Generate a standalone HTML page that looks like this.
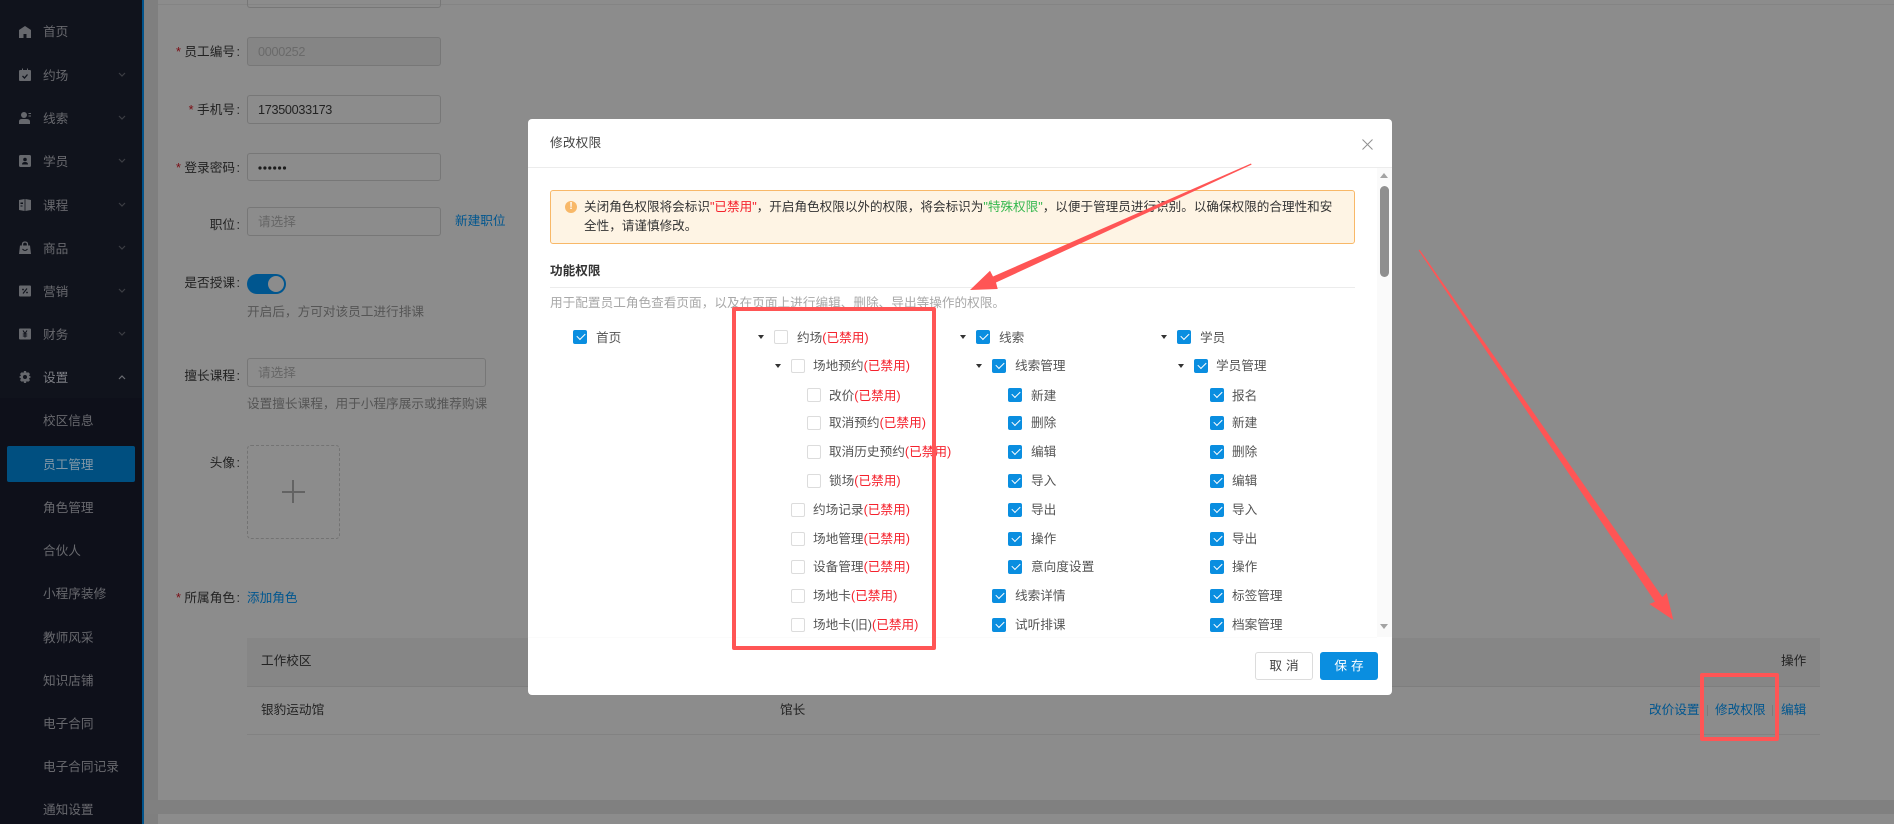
<!DOCTYPE html>
<html lang="zh-CN">
<head>
<meta charset="utf-8">
<title>修改权限</title>
<style>
html,body{margin:0;padding:0;width:1894px;height:824px;overflow:hidden;background:#8c8c8c}
body{position:relative;font-family:"Liberation Sans","Noto Sans CJK SC",sans-serif;font-size:12.65px;color:#222}
div,span,a,svg{box-sizing:border-box}
.a{position:absolute}
.t{position:absolute;white-space:nowrap;line-height:18px;height:18px}
.r{text-align:right;width:120px;left:120px}
.r i{font-style:normal;margin-left:1.5px}
.req{color:#7a0b12}
.in{position:absolute;left:247px;width:194px;height:29px;border:1px solid #777;border-radius:3px;padding-left:10px;line-height:29px;white-space:nowrap}
.num{letter-spacing:-.3px}
.ph{color:#666}
.hp{color:#555}
.lk{color:#00568f}
.nav{color:#68696e}
.ic{position:absolute;left:19px;width:12px;height:14px}
.ch{position:absolute;left:118px;width:8px;height:5px}
.cb{position:absolute;width:14px;height:14px;border:1px solid #dcdcdc;border-radius:2px;background:#fff}
.cb.on{background:#0a8ee0;border-color:#0a8ee0}
.cb.on:after{content:"";position:absolute;left:3px;top:2px;width:7px;height:4px;border-left:1px solid #fff;border-bottom:1px solid #fff;transform:rotate(-45deg)}
.ca{position:absolute;width:0;height:0;border-left:3.5px solid transparent;border-right:3.5px solid transparent;border-top:4px solid #333}
.l{position:absolute;white-space:nowrap;line-height:18px;height:18px;color:#555}
.l i{font-style:normal;color:#f5222d}
</style>
</head>
<body>
<!-- page -->
<div class="a" style="left:144px;top:0;width:14px;height:824px;background:#7f7f7f"></div>
<div class="a" style="left:158px;top:4px;width:1736px;height:796px;background:#8c8c8c;border-top:1px solid #848484"></div>
<div class="a" style="left:144px;top:800px;width:1750px;height:14px;background:#808080"></div>
<div class="a" style="left:247px;top:0;width:194px;height:8px;border:1px solid #777;border-top:0;border-radius:0 0 3px 3px"></div>

<!-- sidebar -->
<div class="a" style="left:0;top:0;width:142px;height:824px;background:#10131c"></div>
<div class="a" style="left:142px;top:0;width:2px;height:824px;background:#00528a"></div>
<div class="a" style="left:0;top:398px;width:142px;height:426px;background:#0e101a"></div>
<div class="a" style="left:7px;top:446px;width:128px;height:36px;background:#004f80;border-radius:2px"></div>

<svg class="ic" style="top:25px" viewBox="0 0 12 14"><path fill="#66686d" d="M6 1 L12 5 V13 H7.5 V9 H4.5 V13 H0 V5 Z"/></svg>
<svg class="ic" style="top:68px" viewBox="0 0 12 14"><path fill="#66686d" d="M1.5 2 H3 V0.5 H4 V2 H8 V0.5 H9 V2 H11 Q12 2 12 3 V12 Q12 13 11 13 H1 Q0 13 0 12 V3 Q0 2 1.5 2 Z"/><path fill="none" stroke="#10131c" stroke-width="1.3" d="M3.5 8 L5.5 10 L8.5 6.5"/></svg>
<svg class="ic" style="top:111px" viewBox="0 0 12 14"><circle cx="5" cy="4" r="3" fill="#66686d"/><path fill="#66686d" d="M0 13 V10.5 Q0 8 3 8 H7 Q11 8 11 10.5 V13 Z"/><path fill="#66686d" d="M9.5 2 H12 V3 H9.5 Z M9.5 4.5 H12 V5.5 H9.5 Z"/></svg>
<svg class="ic" style="top:154px" viewBox="0 0 12 14"><rect x="0" y="1" width="12" height="12" rx="1.5" fill="#66686d"/><circle cx="6" cy="5.5" r="1.8" fill="#10131c"/><path fill="#10131c" d="M3 10.5 Q3 8 6 8 Q9 8 9 10.5 Z"/></svg>
<svg class="ic" style="top:198px" viewBox="0 0 12 14"><path fill="#66686d" d="M0 2 L5.6 1 V13 L0 12 Z M6.4 1 L12 2 V12 L6.4 13 Z"/><path fill="#10131c" d="M1.5 4.5 H4 V6 H1.5 Z M1.5 7.5 H3.5 V8.5 H1.5 Z"/></svg>
<svg class="ic" style="top:241px" viewBox="0 0 12 14"><path fill="none" stroke="#66686d" stroke-width="1.3" d="M3.5 5 V3.5 Q3.5 1 6 1 Q8.5 1 8.5 3.5 V5"/><path fill="#66686d" d="M1 4.5 H11 L12 13 H0 Z"/><path fill="none" stroke="#10131c" d="M3.5 8 Q6 11 8.5 8"/></svg>
<svg class="ic" style="top:284px" viewBox="0 0 12 14"><rect y="1.5" width="12" height="11" rx="1" fill="#66686d"/><path fill="none" stroke="#10131c" stroke-width="1.1" d="M4 9.5 L8 4.5"/><circle cx="4" cy="5.5" r=".9" fill="#10131c"/><circle cx="8" cy="8.5" r=".9" fill="#10131c"/></svg>
<svg class="ic" style="top:327px" viewBox="0 0 12 14"><rect y="1.5" width="12" height="11" rx="1" fill="#66686d"/><path fill="none" stroke="#10131c" stroke-width="1.1" d="M4 3.5 L6 6.5 L8 3.5 M6 6.5 V10.5 M3.8 7 H8.2 M3.8 9 H8.2"/></svg>
<svg class="ic" style="top:370px" viewBox="0 0 12 14"><path fill="#66686d" d="M5 1 H7 L7.5 2.8 L9.3 2.2 L11 4 L10 5.5 L12 7 L10 8.5 L11 10.2 L9.3 11.8 L7.5 11.2 L7 13 H5 L4.5 11.2 L2.7 11.8 L1 10.2 L2 8.5 L0 7 L2 5.5 L1 4 L2.7 2.2 L4.5 2.8 Z"/><circle cx="6" cy="7" r="2" fill="#10131c"/></svg>

<span class="t nav" style="left:43px;top:23px">首页</span>
<span class="t nav" style="left:43px;top:67px">约场</span>
<span class="t nav" style="left:43px;top:110px">线索</span>
<span class="t nav" style="left:43px;top:153px">学员</span>
<span class="t nav" style="left:43px;top:197px">课程</span>
<span class="t nav" style="left:43px;top:240px">商品</span>
<span class="t nav" style="left:43px;top:283px">营销</span>
<span class="t nav" style="left:43px;top:326px">财务</span>
<span class="t" style="left:43px;top:369px;color:#7c7e84">设置</span>
<span class="t nav" style="left:43px;top:412px">校区信息</span>
<span class="t" style="left:43px;top:456px;color:#8197a6">员工管理</span>
<span class="t nav" style="left:43px;top:499px">角色管理</span>
<span class="t nav" style="left:43px;top:542px">合伙人</span>
<span class="t nav" style="left:43px;top:585px">小程序装修</span>
<span class="t nav" style="left:43px;top:629px">教师风采</span>
<span class="t nav" style="left:43px;top:672px">知识店铺</span>
<span class="t nav" style="left:43px;top:715px">电子合同</span>
<span class="t nav" style="left:43px;top:758px">电子合同记录</span>
<span class="t nav" style="left:43px;top:801px">通知设置</span>

<svg class="ch" style="top:72px" viewBox="0 0 8 5"><path d="M1 1 L4 4 L7 1" fill="none" stroke="#3c3e44" stroke-width="1.2"/></svg>
<svg class="ch" style="top:115px" viewBox="0 0 8 5"><path d="M1 1 L4 4 L7 1" fill="none" stroke="#3c3e44" stroke-width="1.2"/></svg>
<svg class="ch" style="top:158px" viewBox="0 0 8 5"><path d="M1 1 L4 4 L7 1" fill="none" stroke="#3c3e44" stroke-width="1.2"/></svg>
<svg class="ch" style="top:202px" viewBox="0 0 8 5"><path d="M1 1 L4 4 L7 1" fill="none" stroke="#3c3e44" stroke-width="1.2"/></svg>
<svg class="ch" style="top:245px" viewBox="0 0 8 5"><path d="M1 1 L4 4 L7 1" fill="none" stroke="#3c3e44" stroke-width="1.2"/></svg>
<svg class="ch" style="top:288px" viewBox="0 0 8 5"><path d="M1 1 L4 4 L7 1" fill="none" stroke="#3c3e44" stroke-width="1.2"/></svg>
<svg class="ch" style="top:331px" viewBox="0 0 8 5"><path d="M1 1 L4 4 L7 1" fill="none" stroke="#3c3e44" stroke-width="1.2"/></svg>
<svg class="ch" style="top:375px" viewBox="0 0 8 5"><path d="M1 4 L4 1 L7 4" fill="none" stroke="#6a6c72" stroke-width="1.2"/></svg>

<!-- form -->
<span class="t r" style="top:43px"><span class="req">* </span>员工编号<i>:</i></span>
<div class="in ph num" style="top:37px;background:#858585;color:#6a6a6a">0000252</div>
<span class="t r" style="top:101px"><span class="req">* </span>手机号<i>:</i></span>
<div class="in num" style="top:95px">17350033173</div>
<span class="t r" style="top:159px"><span class="req">* </span>登录密码<i>:</i></span>
<div class="in" style="top:153px;height:28px"></div>
<svg class="a" style="left:257px;top:165px;width:32px;height:6px" viewBox="0 0 32 6"><g fill="#1c1c1c"><circle cx="3" cy="3" r="1.6"/><circle cx="7.9" cy="3" r="1.6"/><circle cx="12.8" cy="3" r="1.6"/><circle cx="17.7" cy="3" r="1.6"/><circle cx="22.6" cy="3" r="1.6"/><circle cx="27.5" cy="3" r="1.6"/></g></svg>
<span class="t r" style="top:216px">职位<i>:</i></span>
<div class="in ph" style="top:207px">请选择</div>
<span class="t lk" style="left:455px;top:212px">新建职位</span>
<span class="t r" style="top:274px">是否授课<i>:</i></span>
<div class="a" style="left:247px;top:274px;width:39px;height:20px;background:#00568f;border-radius:10px"></div>
<div class="a" style="left:268px;top:276px;width:16px;height:16px;background:#8c8c8c;border-radius:50%"></div>
<span class="t hp" style="left:247px;top:303px">开启后，方可对该员工进行排课</span>
<span class="t r" style="top:367px">擅长课程<i>:</i></span>
<div class="in ph" style="top:358px;width:239px">请选择</div>
<span class="t hp" style="left:247px;top:395px">设置擅长课程，用于小程序展示或推荐购课</span>
<span class="t r" style="top:454px">头像<i>:</i></span>
<div class="a" style="left:247px;top:445px;width:93px;height:94px;border:1px dashed #737373;border-radius:4px"></div>
<div class="a" style="left:282px;top:491px;width:23px;height:2px;background:#636363"></div>
<div class="a" style="left:292px;top:480px;width:2px;height:23px;background:#636363"></div>
<span class="t r" style="top:589px"><span class="req">* </span>所属角色<i>:</i></span>
<span class="t lk" style="left:247px;top:589px">添加角色</span>

<div class="a" style="left:247px;top:638px;width:1573px;height:49px;background:#868686;border-bottom:1px solid #7e7e7e"></div>
<div class="a" style="left:247px;top:687px;width:1573px;height:48px;border-bottom:1px solid #828282"></div>
<span class="t" style="left:261px;top:652px">工作校区</span>
<span class="t" style="left:1781px;top:652px">操作</span>
<span class="t" style="left:261px;top:701px">银豹运动馆</span>
<span class="t" style="left:780px;top:701px">馆长</span>
<span class="t lk" style="left:1649px;top:701px">改价设置</span>
<div class="a" style="left:1707px;top:705px;width:1px;height:11px;background:#7c7c7c"></div>
<span class="t lk" style="left:1715px;top:701px">修改权限</span>
<div class="a" style="left:1772px;top:705px;width:1px;height:11px;background:#7c7c7c"></div>
<span class="t lk" style="left:1781px;top:701px">编辑</span>

<!-- dialog -->
<div class="a" style="left:528px;top:119px;width:864px;height:576px;background:#fff;border-radius:4px;overflow:hidden">
  <div class="a" style="left:0;top:48px;width:864px;height:1px;background:#ececec"></div>
  <span class="t" style="left:22px;top:15px;color:#444;letter-spacing:.2px">修改权限</span>
  <svg class="a" style="left:834px;top:20px;width:11px;height:11px" viewBox="0 0 11 11"><path d="M.5 .5 L10.5 10.5 M10.5 .5 L.5 10.5" stroke="#909090" stroke-width="1" fill="none"/></svg>
  <div class="a" style="left:849px;top:49px;width:15px;height:469px;background:#fafafa"></div>
  <div class="a" style="left:852px;top:54px;width:0;height:0;border-left:4.5px solid transparent;border-right:4.5px solid transparent;border-top:0;border-bottom:5px solid #a3a3a3"></div>
  <div class="a" style="left:852px;top:67px;width:9px;height:91px;background:#8f8f8f;border-radius:5px"></div>
  <div class="a" style="left:852px;top:505px;width:0;height:0;border-left:4.5px solid transparent;border-right:4.5px solid transparent;border-top:5px solid #a3a3a3"></div>
  <div class="a" style="left:0;top:518px;width:849px;height:1px;background:#fbfbfb"></div>
  <div class="a" style="left:727px;top:533px;width:58px;height:28px;border:1px solid #dcdcdc;border-radius:3px;text-align:center;line-height:26px;color:#444;letter-spacing:4px;text-indent:4px">取消</div>
  <div class="a" style="left:792px;top:533px;width:58px;height:28px;background:#0a8ee0;border-radius:3px;text-align:center;line-height:28px;color:#fff;letter-spacing:4px;text-indent:4px">保存</div>
</div>

<!-- alert -->
<div class="a" style="left:550px;top:190px;width:805px;height:54px;background:#fef4e4;border:1px solid #f8b868;border-radius:3px"></div>
<div class="a" style="left:565px;top:201px;width:12px;height:12px;background:#f8b868;border-radius:50%;color:#fff;font-size:10px;line-height:12px;text-align:center;font-weight:700">!</div>
<span class="t" style="left:584px;top:198px;color:#333;font-size:12.6px">关闭角色权限将会标识<span style="color:#f5222d">"已禁用"</span>，开启角色权限以外的权限，将会标识为<span style="color:#36b84f">"特殊权限"</span>，以便于管理员进行识别。以确保权限的合理性和安</span>
<span class="t" style="left:584px;top:217px;color:#333;font-size:12.6px">全性，请谨慎修改。</span>
<span class="t" style="left:550px;top:262px;color:#333;font-weight:700">功能权限</span>
<div class="a" style="left:550px;top:287px;width:805px;height:1px;background:#ececec"></div>
<span class="t" style="left:550px;top:294px;color:#a8a8a8">用于配置员工角色查看页面，以及在页面上进行编辑、删除、导出等操作的权限。</span>

<!-- tree col 1 -->
<div class="cb on" style="left:573px;top:330px"></div><span class="l" style="left:596px;top:329px">首页</span>

<!-- tree col 2 -->
<div class="ca" style="left:758px;top:335px"></div><div class="cb" style="left:774px;top:330px"></div><span class="l" style="left:797px;top:329px">约场<i>(已禁用)</i></span>
<div class="ca" style="left:775px;top:364px"></div><div class="cb" style="left:791px;top:359px"></div><span class="l" style="left:813px;top:357px">场地预约<i>(已禁用)</i></span>
<div class="cb" style="left:807px;top:388px"></div><span class="l" style="left:829px;top:387px">改价<i>(已禁用)</i></span>
<div class="cb" style="left:807px;top:416px"></div><span class="l" style="left:829px;top:414px">取消预约<i>(已禁用)</i></span>
<div class="cb" style="left:807px;top:445px"></div><span class="l" style="left:829px;top:443px">取消历史预约<i>(已禁用)</i></span>
<div class="cb" style="left:807px;top:474px"></div><span class="l" style="left:829px;top:472px">锁场<i>(已禁用)</i></span>
<div class="cb" style="left:791px;top:503px"></div><span class="l" style="left:813px;top:501px">约场记录<i>(已禁用)</i></span>
<div class="cb" style="left:791px;top:532px"></div><span class="l" style="left:813px;top:530px">场地管理<i>(已禁用)</i></span>
<div class="cb" style="left:791px;top:560px"></div><span class="l" style="left:813px;top:558px">设备管理<i>(已禁用)</i></span>
<div class="cb" style="left:791px;top:589px"></div><span class="l" style="left:813px;top:587px">场地卡<i>(已禁用)</i></span>
<div class="cb" style="left:791px;top:618px"></div><span class="l" style="left:813px;top:616px">场地卡(旧)<i>(已禁用)</i></span>

<!-- tree col 3 -->
<div class="ca" style="left:960px;top:335px"></div><div class="cb on" style="left:976px;top:330px"></div><span class="l" style="left:999px;top:329px">线索</span>
<div class="ca" style="left:976px;top:364px"></div><div class="cb on" style="left:992px;top:359px"></div><span class="l" style="left:1015px;top:357px">线索管理</span>
<div class="cb on" style="left:1008px;top:388px"></div><span class="l" style="left:1031px;top:387px">新建</span>
<div class="cb on" style="left:1008px;top:416px"></div><span class="l" style="left:1031px;top:414px">删除</span>
<div class="cb on" style="left:1008px;top:445px"></div><span class="l" style="left:1031px;top:443px">编辑</span>
<div class="cb on" style="left:1008px;top:474px"></div><span class="l" style="left:1031px;top:472px">导入</span>
<div class="cb on" style="left:1008px;top:503px"></div><span class="l" style="left:1031px;top:501px">导出</span>
<div class="cb on" style="left:1008px;top:532px"></div><span class="l" style="left:1031px;top:530px">操作</span>
<div class="cb on" style="left:1008px;top:560px"></div><span class="l" style="left:1031px;top:558px">意向度设置</span>
<div class="cb on" style="left:992px;top:589px"></div><span class="l" style="left:1015px;top:587px">线索详情</span>
<div class="cb on" style="left:992px;top:618px"></div><span class="l" style="left:1015px;top:616px">试听排课</span>

<!-- tree col 4 -->
<div class="ca" style="left:1161px;top:335px"></div><div class="cb on" style="left:1177px;top:330px"></div><span class="l" style="left:1200px;top:329px">学员</span>
<div class="ca" style="left:1178px;top:364px"></div><div class="cb on" style="left:1194px;top:359px"></div><span class="l" style="left:1216px;top:357px">学员管理</span>
<div class="cb on" style="left:1210px;top:388px"></div><span class="l" style="left:1232px;top:387px">报名</span>
<div class="cb on" style="left:1210px;top:416px"></div><span class="l" style="left:1232px;top:414px">新建</span>
<div class="cb on" style="left:1210px;top:445px"></div><span class="l" style="left:1232px;top:443px">删除</span>
<div class="cb on" style="left:1210px;top:474px"></div><span class="l" style="left:1232px;top:472px">编辑</span>
<div class="cb on" style="left:1210px;top:503px"></div><span class="l" style="left:1232px;top:501px">导入</span>
<div class="cb on" style="left:1210px;top:532px"></div><span class="l" style="left:1232px;top:530px">导出</span>
<div class="cb on" style="left:1210px;top:560px"></div><span class="l" style="left:1232px;top:558px">操作</span>
<div class="cb on" style="left:1210px;top:589px"></div><span class="l" style="left:1232px;top:587px">标签管理</span>
<div class="cb on" style="left:1210px;top:618px"></div><span class="l" style="left:1232px;top:616px">档案管理</span>

<!-- annotations -->
<div class="a" style="left:732px;top:307px;width:204px;height:343px;border:4px solid #ff5555;border-radius:2px"></div>
<div class="a" style="left:1700px;top:673px;width:79px;height:68px;border:4px solid #ff5555;border-radius:2px"></div>
<svg class="a" style="left:0;top:0;width:1894px;height:824px" viewBox="0 0 1894 824">
<polygon fill="#ff5555" points="1251,163.5 1251.6,164.6 996,282.5 997.7,289 970,290 990,270.7 993,276.5"/>
<polygon fill="#ff5555" points="1419.6,249.6 1662.3,597 1666.7,592.7 1673.3,620 1649.3,604 1655,601.7 1418.6,250.4"/>
</svg>
</body>
</html>
